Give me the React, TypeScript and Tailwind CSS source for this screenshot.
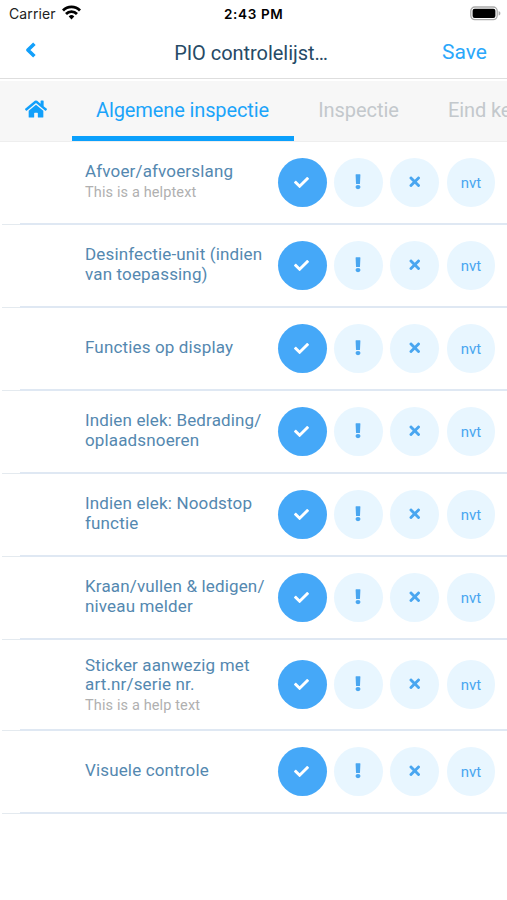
import React from "react";
import { FaCheck, FaHome, FaTimes } from "react-icons/fa";

type Item = { lines: string[]; help?: string; height: string; pad: string };

const items: Item[] = [
  { lines: ["Afvoer/afvoerslang"], help: "This is a helptext", height: "h-[83px]", pad: "pb-0" },
  { lines: ["Desinfectie-unit (indien", "van toepassing)"], height: "h-[83px]", pad: "pb-[2px]" },
  { lines: ["Functies op display"], height: "h-[83px]", pad: "pb-[2px]" },
  { lines: ["Indien elek: Bedrading/", "oplaadsnoeren"], height: "h-[83px]", pad: "pb-[2px]" },
  { lines: ["Indien elek: Noodstop", "functie"], height: "h-[83px]", pad: "pb-[2px]" },
  { lines: ["Kraan/vullen & ledigen/", "niveau melder"], height: "h-[83px]", pad: "pb-[2px]" },
  { lines: ["Sticker aanwezig met", "art.nr/serie nr."], help: "This is a help text", height: "h-[91px]", pad: "pt-[2px]" },
  { lines: ["Visuele controle"], height: "h-[83px]", pad: "pb-[2px]" },
];

function StatusBar() {
  return (
    <div className="flex h-[27px] items-center pl-[9px] pr-[6px] text-black">
      <div className="flex w-[215px] items-center">
        <span className="w-[53px] whitespace-nowrap font-[Inter] text-[14px] leading-[18px] tracking-[0.1px] text-[#222]">Carrier</span>
        <svg className="mb-[2px]" width="19" height="15" viewBox="0 0 19 15" fill="none" stroke="currentColor" strokeWidth="2.8">
          <path d="M1 5.4a12 12 0 0 1 17 0" />
          <path d="M4 8.9a7.8 7.8 0 0 1 11 0" />
          <path d="M6.7 11.4a4 4 0 0 1 5.6 0L9.5 14.4z" fill="currentColor" stroke="none" />
        </svg>
      </div>
      <span className="font-[Inter] text-[13.5px] font-semibold leading-[18px] tracking-[0.65px]">2:43 PM</span>
      <svg className="ml-auto" width="31" height="16" viewBox="0 0 31 16">
        <rect x="0.8" y="1" width="26.4" height="12.6" rx="4" fill="#fff" stroke="#aaa" strokeWidth="1.3" />
        <rect x="2.6" y="2.7" width="22.8" height="9.3" rx="2" fill="#000" />
        <path d="M28.6 5c2.4.8 2.4 3.8 0 4.6z" fill="#aaa" />
      </svg>
    </div>
  );
}

function Header() {
  return (
    <header className="flex h-[52px] items-center border-b border-[#dedede] px-[20px]">
      <div className="flex w-[90px] pb-[5px] pl-[5px] text-[#12a0fb]">
        <svg width="12" height="16" viewBox="0 0 12 16" fill="none" stroke="currentColor" strokeWidth="3.6" strokeLinejoin="round">
          <path d="M9.4 1.7 2.9 8l6.5 6.3" />
        </svg>
      </div>
      <h1 className="flex-1 pr-[5px] text-center text-[20px] leading-6 tracking-[-0.04px] text-[#264a66]">PIO controlelijst…</h1>
      <button className="w-[90px] pb-[1px] text-right text-[21px] leading-6 text-[#2ba7fb]">Save</button>
    </header>
  );
}

function Tabs() {
  return (
    <nav className="mt-[2px] flex h-[61px] overflow-hidden border-b border-[#eeeeee] bg-[#f7f7f7] text-[20px] leading-6">
      <div className="flex w-[72px] shrink-0 items-center justify-center pb-[4px] text-[#12a0fb]">
        <FaHome size={22} />
      </div>
      <div className="flex w-[222px] shrink-0 flex-col items-center text-[#1ba4fa]">
        <span className="flex flex-1 items-center whitespace-nowrap pr-[1px] pt-[2px] tracking-[-0.12px]">Algemene inspectie</span>
        <span className="h-[5px] w-full bg-[#0ba0fc]" />
      </div>
      <span className="flex w-[129px] shrink-0 items-center justify-center pb-[3px] tracking-[-0.06px] text-[#c3c8cc]">Inspectie</span>
      <span className="flex shrink-0 items-center whitespace-nowrap pb-[3px] pl-[25px] tracking-[-0.1px] text-[#c3c8cc]">Eind ke</span>
    </nav>
  );
}

function Row({ item }: { item: Item }) {
  const pale = "flex size-[48.8px] items-center justify-center rounded-full bg-[#e8f6ff] text-[#49a6f0]";
  return (
    <li className={`flex flex-col ${item.height}`}>
      <div className="flex min-h-0 flex-1 items-center pl-[85px] pr-[11.6px]">
        <div className={`flex-1 whitespace-nowrap ${item.pad}`}>
          {item.lines.map((line) => (
            <div key={line} className="text-[17px] leading-[19.5px] tracking-[0.15px] text-[#5488b0]">{line}</div>
          ))}
          {item.help && <div className="mt-[1px] text-[14.5px] leading-[20px] tracking-[0.13px] text-[#b0b0b0]">{item.help}</div>}
        </div>
        <div className="flex gap-[7.5px]">
          <div className="flex size-[48.8px] items-center justify-center rounded-full bg-[#45a8f8] pr-[1px] text-white"><FaCheck size={15} /></div>
          <div className={`${pale} pr-[1px]`}>
            <svg width="6" height="16" viewBox="0 0 6 16" fill="currentColor">
              <path d="M.6.8Q.6.3 1.1.3h3.8q.5 0 .5.5L5 9.4q0 .5-.5.5h-3q-.5 0-.5-.5z" />
              <ellipse cx="3" cy="13.1" rx="2.5" ry="2.1" />
            </svg>
          </div>
          <div className={`${pale} pb-[1px]`}><FaTimes size={15.5} /></div>
          <div className={`${pale} pt-[1px] text-[15px]`}>nvt</div>
        </div>
      </div>
      <div className="flex h-[2px] items-end pl-[2px]">
        <span className="h-[1px] w-[18px] bg-[#e4eaef]" />
        <span className="h-[2px] flex-1 bg-[#dfe8f3]" />
      </div>
    </li>
  );
}

export default function App() {
  return (
    <div className="h-[900px] w-[507px] overflow-hidden bg-white font-[Roboto,sans-serif]">
      <StatusBar />
      <Header />
      <Tabs />
      <ul>
        {items.map((item) => <Row key={item.lines[0]} item={item} />)}
      </ul>
    </div>
  );
}
